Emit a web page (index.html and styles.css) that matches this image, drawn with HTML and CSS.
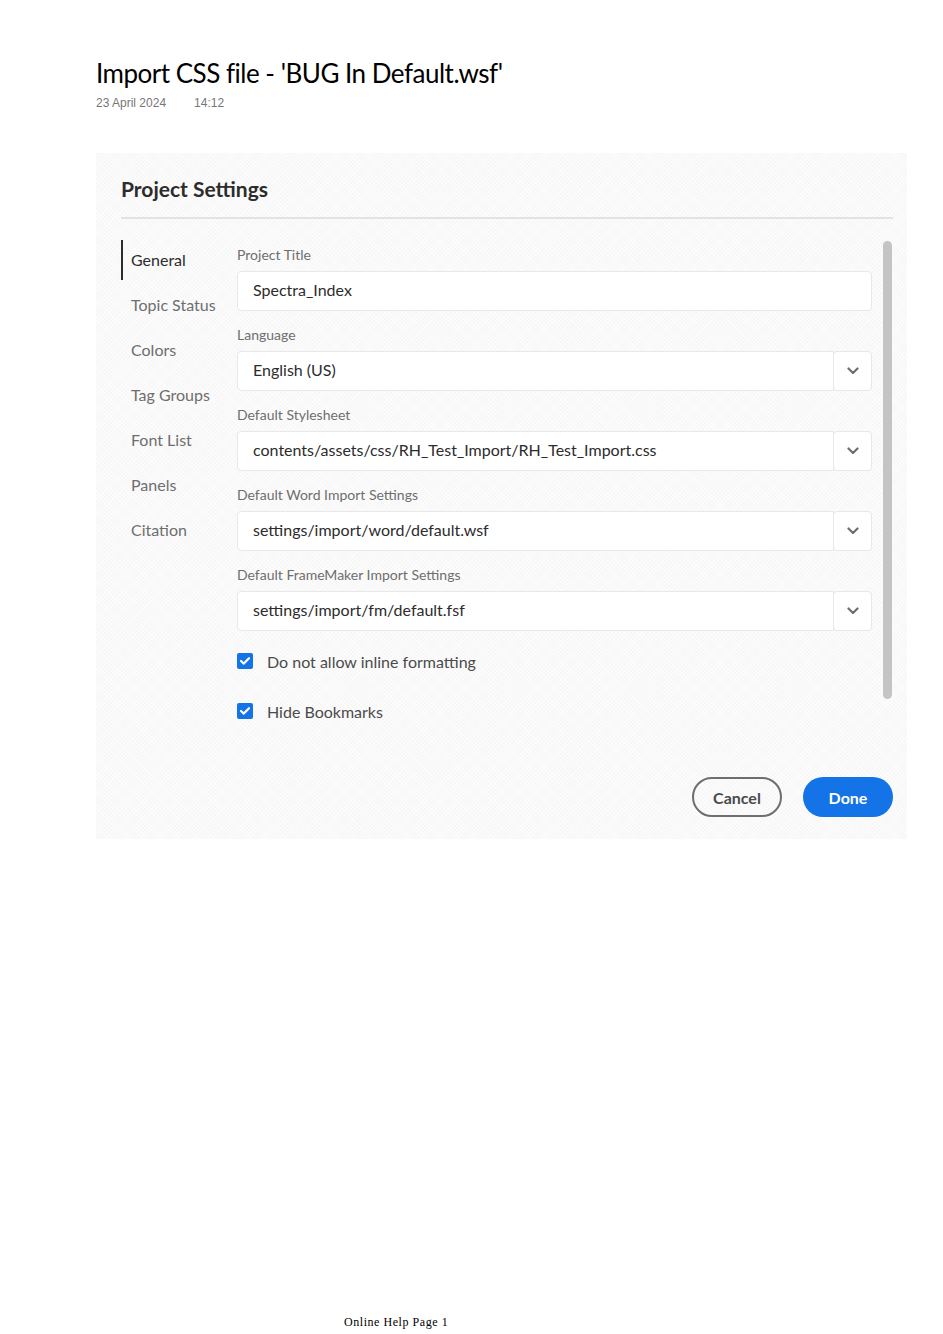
FILE: index.html
```html
<!DOCTYPE html>
<html lang="en">
<head>
    <meta charset="UTF-8">
    <meta name="viewport" content="width=device-width, initial-scale=1.0">
    <title>Import CSS file - 'BUG In Default.wsf'</title>
    <link rel="stylesheet" href="styles.css">
</head>
<body>
    <div class="page">
        <div class="doc-head">
            <h1>Import CSS file - 'BUG In Default.wsf'</h1>
            <div class="meta"><span>23 April 2024</span><span>14:12</span></div>
        </div>

        <div class="panel">
            <h2>Project Settings</h2>
            <div class="divider"></div>

            <div class="panel-body">
                <ul class="side">
                    <li class="active">General</li>
                    <li>Topic Status</li>
                    <li>Colors</li>
                    <li>Tag Groups</li>
                    <li>Font List</li>
                    <li>Panels</li>
                    <li>Citation</li>
                </ul>

                <div class="content">
                    <div class="field">
                        <label>Project Title</label>
                        <div class="input">Spectra_Index</div>
                    </div>
                    <div class="field">
                        <label>Language</label>
                        <div class="select">
                            <div class="input">English (US)</div>
                            <div class="drop"><svg width="12" height="8" viewBox="0 0 12 8"><path d="M1.5 1.5 L6 6 L10.5 1.5" fill="none" stroke="#6e6e6e" stroke-width="2.2" stroke-linecap="round" stroke-linejoin="round"/></svg></div>
                        </div>
                    </div>
                    <div class="field">
                        <label>Default Stylesheet</label>
                        <div class="select">
                            <div class="input">contents/assets/css/RH_Test_Import/RH_Test_Import.css</div>
                            <div class="drop"><svg width="12" height="8" viewBox="0 0 12 8"><path d="M1.5 1.5 L6 6 L10.5 1.5" fill="none" stroke="#6e6e6e" stroke-width="2.2" stroke-linecap="round" stroke-linejoin="round"/></svg></div>
                        </div>
                    </div>
                    <div class="field">
                        <label>Default Word Import Settings</label>
                        <div class="select">
                            <div class="input">settings/import/word/default.wsf</div>
                            <div class="drop"><svg width="12" height="8" viewBox="0 0 12 8"><path d="M1.5 1.5 L6 6 L10.5 1.5" fill="none" stroke="#6e6e6e" stroke-width="2.2" stroke-linecap="round" stroke-linejoin="round"/></svg></div>
                        </div>
                    </div>
                    <div class="field">
                        <label>Default FrameMaker Import Settings</label>
                        <div class="select">
                            <div class="input">settings/import/fm/default.fsf</div>
                            <div class="drop"><svg width="12" height="8" viewBox="0 0 12 8"><path d="M1.5 1.5 L6 6 L10.5 1.5" fill="none" stroke="#6e6e6e" stroke-width="2.2" stroke-linecap="round" stroke-linejoin="round"/></svg></div>
                        </div>
                    </div>

                    <div class="check">
                        <span class="box"><svg width="12" height="10" viewBox="0 0 12 10"><path d="M2 5 L4.8 7.6 L10 2.2" fill="none" stroke="#fff" stroke-width="2.2" stroke-linecap="round" stroke-linejoin="round"/></svg></span>
                        Do not allow inline formatting
                    </div>
                    <div class="check">
                        <span class="box"><svg width="12" height="10" viewBox="0 0 12 10"><path d="M2 5 L4.8 7.6 L10 2.2" fill="none" stroke="#fff" stroke-width="2.2" stroke-linecap="round" stroke-linejoin="round"/></svg></span>
                        Hide Bookmarks
                    </div>
                </div>

                <div class="scrollbar"></div>
            </div>

            <div class="actions">
                <button class="btn-cancel">Cancel</button>
                <button class="btn-done">Done</button>
            </div>
        </div>

        <div class="footer">Online Help Page 1</div>
    </div>
</body>
</html>
```

FILE: styles.css
```css
body { margin: 0; background: #fff; }

.page { min-height: 1334px; display: flex; flex-direction: column; }

.doc-head { padding: 57px 0 0 96px; }

h1 { margin: 0; font-family: Lato, sans-serif; font-weight: 400; font-size: 26px; line-height: 32px; color: #000; letter-spacing: -0.5px; }

.meta { font-family: "Liberation Sans", Arial, sans-serif; font-size: 12px; color: #777; margin-top: 7px; display: flex; gap: 28px; }

.panel { margin: 43px 0 0 96px; width: 811px; box-sizing: border-box; padding: 22px 14px 22px 25px; background: #f7f7f7; background-image: repeating-linear-gradient(45deg, rgba(255,255,255,0.5) 0 1px, transparent 1px 3px), repeating-linear-gradient(-45deg, rgba(255,255,255,0.5) 0 1px, transparent 1px 3px); font-family: Lato, sans-serif; }

h2 { margin: 0; font-size: 21px; line-height: 28px; font-weight: 700; color: #2c2c2c; }

.divider { height: 2px; background: #e3e3e3; margin-top: 14px; }

.panel-body { display: flex; margin-top: 21px; }

.side { list-style: none; margin: 0; padding: 0; width: 116px; flex-shrink: 0; }

.side li { height: 40px; line-height: 40px; padding-left: 8px; margin-bottom: 5px; font-size: 16px; color: #6e6e6e; border-left: 2px solid transparent; }

.side li.active { border-left-color: #2c2c2c; color: #2c2c2c; }

.content { flex: 1; padding-top: 6px; }

.field { margin-bottom: 15px; }

.field label { display: block; font-size: 14px; line-height: 18px; color: #6e6e6e; margin-bottom: 7px; }

.input { height: 40px; box-sizing: border-box; border: 1px solid #e8e8e8; border-radius: 4px; background: #fff; padding: 0 15px; line-height: 36px; font-size: 16px; color: #2c2c2c; white-space: nowrap; }

.select { display: flex; }

.select .input { flex: 1; border-radius: 4px 0 0 4px; }

.drop { width: 39px; height: 40px; box-sizing: border-box; border: 1px solid #e8e8e8; border-radius: 4px; background: #fff; display: flex; align-items: center; justify-content: center; margin-left: -1px; }

.check { display: flex; align-items: center; gap: 14px; height: 24px; font-size: 16px; color: #4b4b4b; margin-top: 18px; margin-bottom: 26px; }

.check + .check { margin-top: 0; }

.box { width: 16px; height: 16px; border-radius: 2px; background: #1473e6; display: flex; align-items: center; justify-content: center; }

.scrollbar { width: 9px; height: 458px; background: #c4c4c4; border-radius: 5px; margin: 1px 1px 0 11px; flex-shrink: 0; }

.actions { display: flex; justify-content: flex-end; gap: 21px; margin-top: 28px; }

.actions button { width: 90px; height: 40px; border-radius: 20px; font-family: Lato, sans-serif; font-size: 16px; font-weight: 700; cursor: pointer; }

.btn-cancel { background: transparent; border: 2px solid #6e6e6e; color: #4b4b4b; }

.btn-done { background: #1473e6; border: none; color: #fff; }

.footer { margin-top: auto; padding: 0 0 5px 344px; font-family: "Liberation Serif", "Times New Roman", serif; font-size: 12px; line-height: 14px; letter-spacing: 0.55px; color: #000; }
```
